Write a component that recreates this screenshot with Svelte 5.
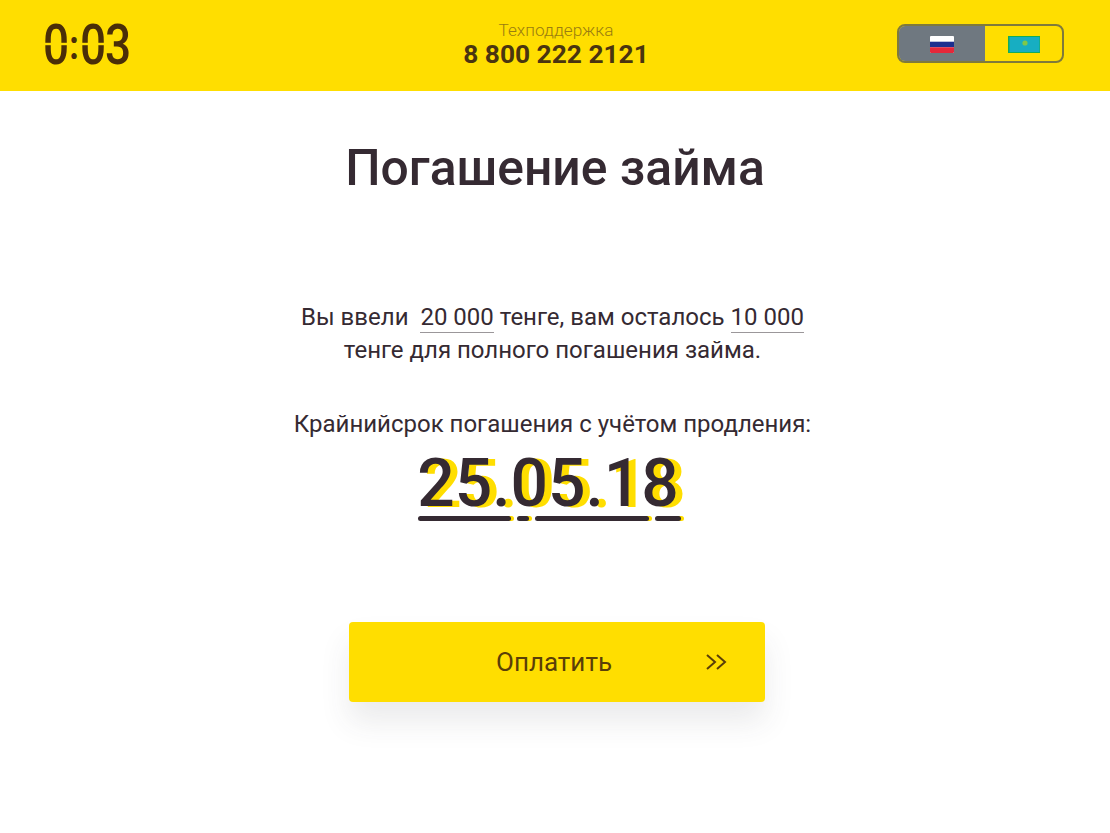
<script>
	const timer = ['0', ':', '0', '3'];
	const dateBars = ['long', 'dot', 'longer', 'end'];
</script>

<header class="top">
	<div class="timer">
		{#each timer as ch}
			<span class="ch" class:zero={ch === '0'} class:sep={ch === ':'}>{ch}</span>
		{/each}
	</div>
	<div class="support">
		<span class="support-label">Техподдержка</span>
		<span class="phone">8 800 222 2121</span>
	</div>
	<div class="langs">
		<button class="lang active" aria-label="Русский">
			<svg width="24" height="17" viewBox="0 0 24 17">
				<rect width="24" height="17" rx="1" fill="#fff" />
				<rect y="5.7" width="24" height="5.6" fill="#1c2f8f" />
				<path d="M0 11.3h24V16a1 1 0 0 1-1 1H1a1 1 0 0 1-1-1z" fill="#e5283a" />
			</svg>
		</button>
		<button class="lang" aria-label="Қазақша">
			<svg width="32" height="17" viewBox="0 0 32 17">
				<rect width="32" height="17" fill="#12ad5a" />
				<rect x="1.5" y="1" width="30" height="15" fill="#17aec2" />
				<circle cx="17" cy="7" r="2.6" fill="#7fc84a" />
			</svg>
		</button>
	</div>
</header>

<main class="page">
	<h1>Погашение займа</h1>

	<p class="info">
		Вы ввели &nbsp;<span class="sum">20 000</span> тенге, вам осталось <span class="sum">10 000</span><br />
		тенге для полного погашения займа.
	</p>

	<p class="deadline">Крайнийсрок погашения с учётом продления:</p>

	<div class="date">25.05.18</div>
	<div class="date-line">
		{#each dateBars as bar}
			<span class="bar {bar}"></span>
		{/each}
	</div>

	<button class="pay">
		<span class="pay-label">Оплатить</span>
		<svg class="pay-icon" width="24" height="18" viewBox="0 0 24 18" fill="none" stroke="#5a3f08" stroke-width="2">
			<path d="M2 2l8 7-8 7" />
			<path d="M12 2l8 7-8 7" />
		</svg>
	</button>
</main>

<style>
	:global(body) {
		background: #fff;
		font-family: Roboto, 'Liberation Sans', sans-serif;
		color: #352a32;
	}

	.top {
		height: 91px;
		background: #ffde00;
		display: grid;
		grid-template-columns: 1fr auto 1fr;
		align-items: center;
		padding: 0 46px;
	}

	.timer {
		display: flex;
		align-items: center;
		color: #4a2e08;
		font-size: 46px;
		line-height: 32px;
		font-weight: 500;
		height: 32px;
		margin: -4px 0 0 -3px;
		transform: scaleY(1.22);
	}

	.ch {
		position: relative;
		display: block;
		width: 25px;
		text-align: center;
	}

	.zero::after {
		content: '';
		position: absolute;
		left: 0;
		right: 0;
		top: 15px;
		height: 2px;
		background: #ffde00;
	}

	.sep {
		width: 12px;
		font-weight: 700;
		font-size: 34px;
	}

	.support {
		display: flex;
		flex-direction: column;
		align-items: center;
		margin: -2px 0 0 2px;
	}

	.support-label {
		font-size: 17.2px;
		line-height: 18px;
		font-weight: 300;
		color: #9a7d10;
	}

	.phone {
		font-size: 26.3px;
		line-height: 30px;
		font-weight: 700;
		color: #4a3410;
	}

	.langs {
		justify-self: end;
		width: 167px;
		height: 39px;
		box-sizing: border-box;
		display: flex;
		border: 2px solid #7f7a3c;
		border-radius: 8px;
		overflow: hidden;
		margin-top: -4px;
	}

	.lang {
		flex: 1;
		padding: 2px 0 0;
		border: 0;
		background: transparent;
		display: flex;
		align-items: center;
		justify-content: center;
	}

	.lang.active {
		flex: none;
		width: 86px;
		background: #6f7880;
	}

	.page {
		display: flex;
		flex-direction: column;
		align-items: center;
		padding-bottom: 131px;
	}

	h1 {
		margin: 47px 0 0;
		font-size: 49.8px;
		line-height: 60px;
		font-weight: 500;
	}

	.info {
		margin: 103px 5px 0 0;
		font-size: 24px;
		line-height: 33px;
		text-align: center;
		white-space: nowrap;
	}

	.sum {
		border-bottom: 1px solid #9b979a;
		padding-bottom: 1px;
	}

	.deadline {
		margin: 41px 5px 0 0;
		font-size: 24px;
		line-height: 33px;
	}

	.date {
		margin: 11px 14px 0 0;
		font-size: 66px;
		line-height: 64px;
		font-weight: 500;
		text-shadow: 7px 1px 0 #ffde00;
	}

	.date-line {
		display: flex;
		gap: 6px;
		margin: 0 12px 0 0;
	}

	.bar {
		height: 5px;
		border-radius: 3px;
		background: #352a32;
		box-shadow: 3px 0 0 #ffde00;
	}

	.long {
		width: 93px;
	}

	.dot {
		width: 12px;
	}

	.longer {
		width: 114px;
	}

	.end {
		width: 26px;
	}

	.pay {
		margin: 101px 0 0 4px;
		width: 416px;
		height: 80px;
		padding: 0 36px 0 0;
		border: 0;
		border-radius: 4px;
		background: #ffde00;
		box-shadow: 0 20px 30px rgba(60, 60, 70, 0.1);
		font-family: inherit;
		color: #5a3f08;
		display: grid;
		grid-template-columns: 1fr auto 1fr;
		align-items: center;
	}

	.pay-label {
		grid-column: 2;
		font-size: 26px;
		margin-left: 30px;
	}

	.pay-icon {
		grid-column: 3;
		justify-self: end;
	}
</style>
